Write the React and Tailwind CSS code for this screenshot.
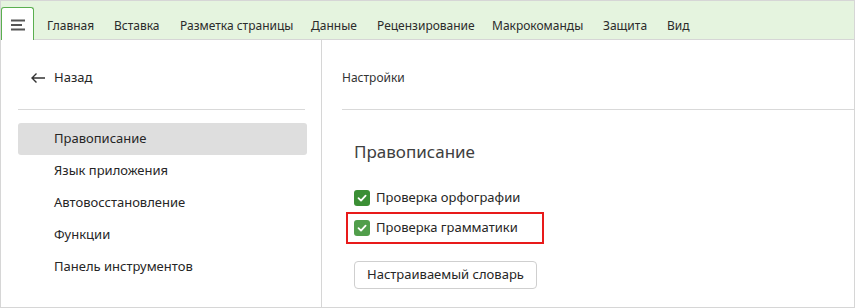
import React from "react";

const tabs = [
  ["Главная", "w-[67px]"],
  ["Вставка", "w-[66px]"],
  ["Разметка страницы", "w-[131px]"],
  ["Данные", "w-[66px]"],
  ["Рецензирование", "w-[115px]"],
  ["Макрокоманды", "w-[111px]"],
  ["Защита", "w-[64px]"],
  ["Вид", "w-[40px]"],
];
const items = ["Правописание", "Язык приложения", "Автовосстановление", "Функции", "Панель инструментов"];

function Check({ color }) {
  return (
    <span className={`flex h-[16px] w-[16px] shrink-0 items-center justify-center rounded-[3px] ${color}`}>
      <svg width="12" height="12" viewBox="0 0 12 12" fill="none">
        <path d="M2.5 6.2 L5 8.6 L9.6 3.6" stroke="white" strokeWidth="1.8" strokeLinecap="round" strokeLinejoin="round" />
      </svg>
    </span>
  );
}

export default function App() {
  return (
    <div className="h-[308px] w-[855px] border border-[#d6d6d6] bg-white text-[#262626]" style={{ fontFamily: '"Noto Sans", "Open Sans", sans-serif' }}>
      <div className="flex h-[39px] items-end border-b border-[#d6d6d6] bg-[#e5f4df]">
        <div className="relative -mb-px flex h-[33px] w-[33px] items-center justify-center rounded-t-[3px] border border-b-0 border-[#5aaf4f] bg-white">
          <svg width="16" height="14" viewBox="0 0 16 14" className="mt-[2px]">
            <rect x="1" y="1.5" width="14" height="2" fill="#555" />
            <rect x="1" y="6" width="11" height="2" fill="#555" />
            <rect x="1" y="10.5" width="14" height="2" fill="#555" />
          </svg>
        </div>
        <div className="flex h-[32px] items-center pl-[13px] pt-[5px] text-[12px] text-[#2b2b2b]">
          {tabs.map(([t, w]) => (
            <span key={t} className={`${w} whitespace-nowrap`}>{t}</span>
          ))}
        </div>
      </div>
      <div className="flex h-[267px]">
        <div className="w-[321px] shrink-0 border-r border-[#d6d6d6] pl-[17px] pr-[16px]">
          <div className="flex h-[70px] items-center border-b border-[#d9d9d9] pl-[12px] pt-[6px] text-[13px]">
            <svg width="16" height="12" viewBox="0 0 16 12" className="mr-[8px]">
              <path d="M15 6 H2 M6.5 1.5 L2 6 L6.5 10.5" stroke="#333" strokeWidth="1.4" fill="none" />
            </svg>
            Назад
          </div>
          <div className="mt-[13px] -mr-[2px] flex flex-col text-[13px]">
            {items.map((t, i) => (
              <div key={t} className={`flex h-[32px] items-center rounded-[3px] pl-[36px] ${i === 0 ? "bg-[#dedede]" : ""}`}>
                {t}
              </div>
            ))}
          </div>
        </div>
        <div className="flex-1 pl-[20px]">
          <div className="flex h-[70px] items-center border-b border-[#d9d9d9] pt-[6px] text-[12px] text-[#333]">Настройки</div>
          <div className="pl-[12px] pt-[29px]">
            <div className="text-[17px] text-[#404040]">Правописание</div>
            <div className="mt-[23px] flex h-[20px] items-center gap-[6px] text-[13px]">
              <Check color="bg-[#3b8f35]" />
              Проверка орфографии
            </div>
            <div className="-ml-[8px] mt-[4px] flex h-[32px] w-[198px] items-center gap-[6px] border-2 border-[#e81a1a] pl-[6px] text-[13px]">
              <Check color="bg-[#519e4b]" />
              Проверка грамматики
            </div>
            <button className="mt-[17px] h-[28px] rounded-[4px] border border-[#cfcfcf] bg-white px-[12px] text-[13px] text-[#262626]">
              Настраиваемый словарь
            </button>
          </div>
        </div>
      </div>
    </div>
  );
}
